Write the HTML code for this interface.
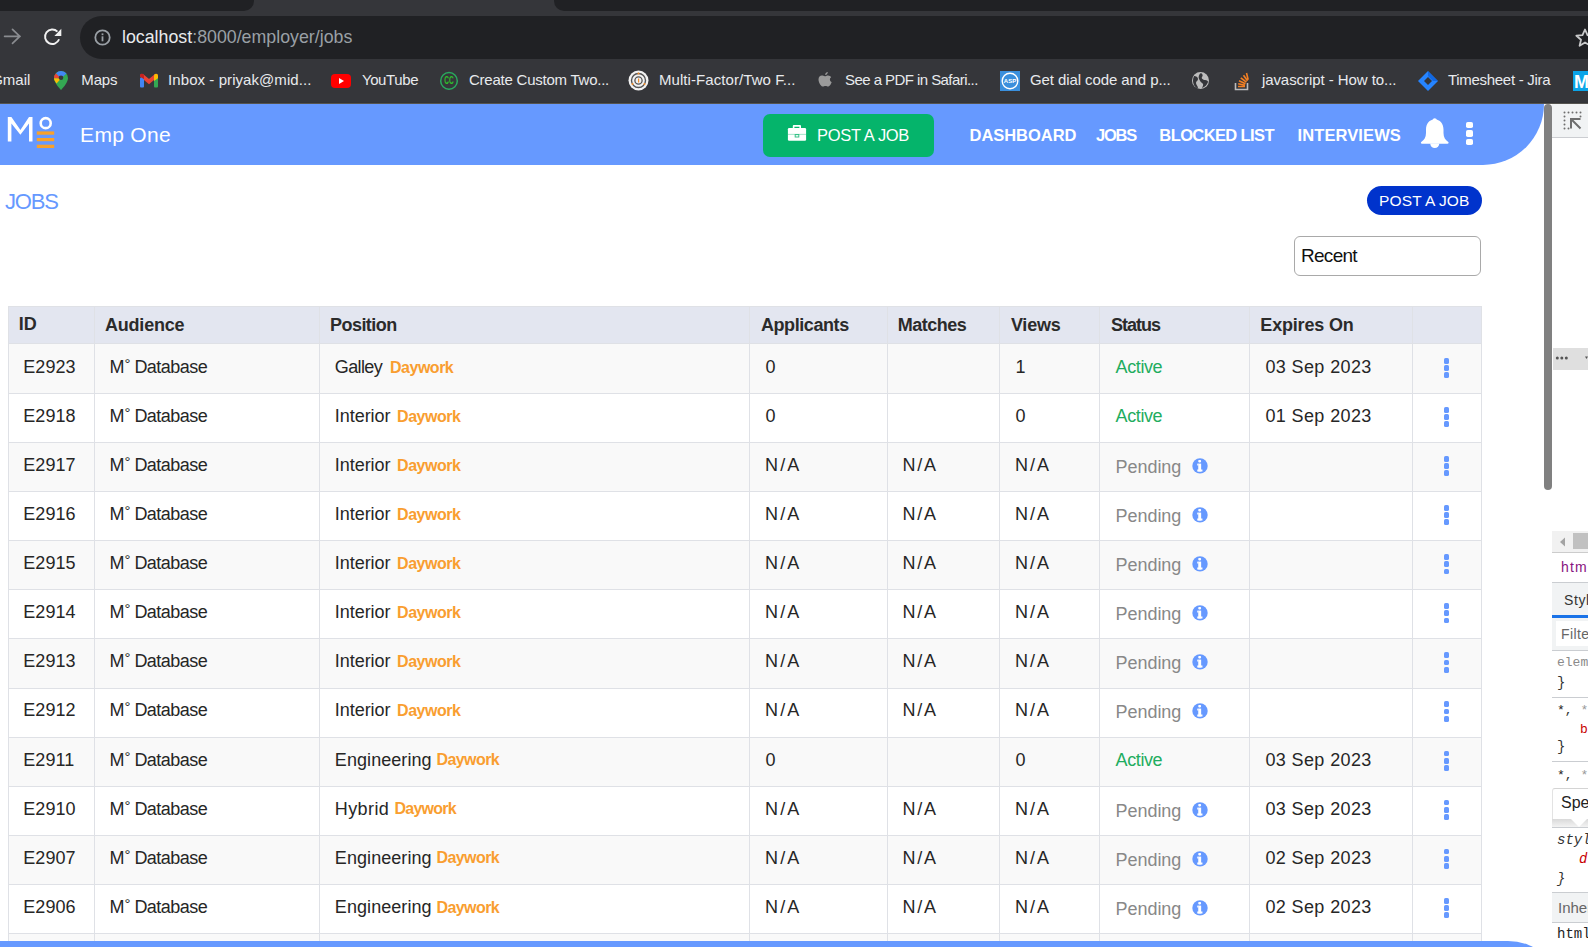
<!DOCTYPE html><html><head><meta charset="utf-8"><style>
*{box-sizing:border-box}
html,body{margin:0;padding:0}
body{width:1588px;height:947px;overflow:hidden;position:relative;background:#fff;font-family:"Liberation Sans",sans-serif}
.a{position:absolute}
.t{position:absolute;white-space:nowrap;line-height:1}
.bm{position:absolute;font-size:15px;color:#e8eaed;white-space:nowrap;line-height:1}
.nav{position:absolute;font-size:16.5px;font-weight:bold;color:#fff;white-space:nowrap;line-height:1}
.th{position:absolute;font-size:18px;font-weight:bold;color:#2b2b2b;white-space:nowrap;line-height:1}
.td{position:absolute;font-size:18px;color:#262626;white-space:nowrap;line-height:1}
.dw{font-size:15px;font-weight:bold;color:#f7a23b}
.act{color:#1fad5f}
.pen{color:#888}
.vl{position:absolute;width:1px;background:#dfe1e6}
.hl{position:absolute;height:1px;background:#dfe1e6}
.keb{position:absolute;width:5.4px}
.keb i{display:block;width:5.4px;height:5.8px;border-radius:1.6px;background:#6699ff;margin-bottom:1.4px}
</style></head><body>
<div class="a" style="left:0;top:0;width:1588px;height:104px;background:#35363a"></div>
<div class="a" style="left:0;top:0;width:254px;height:11px;background:#202124;border-bottom-right-radius:10px"></div>
<div class="a" style="left:554px;top:0;width:1040px;height:11px;background:#202124;border-bottom-left-radius:10px"></div>
<div class="a" style="left:0;top:102px;width:1588px;height:1px;background:#323337"></div>
<div class="a" style="left:0;top:103px;width:1588px;height:1px;background:#55544f"></div>
<svg class="a" style="left:0px;top:25px" width="24" height="24" viewBox="0 0 24 24"><path d="M4.6 11.3H20.1M12.5 4.3L19.8 11.3L12.5 18.4" stroke="#8a8c90" stroke-width="1.7" fill="none" stroke-linecap="round" stroke-linejoin="round"/></svg>
<svg class="a" style="left:40px;top:25px" width="26" height="24" viewBox="0 0 26 24"><path d="M19.1 14.23A7.25 7.25 0 1 1 17.43 6.62" stroke="#f1f1f1" stroke-width="1.9" fill="none"/><path d="M21.3 3.8V10.9H14.4Z" fill="#f1f1f1"/></svg>
<div class="a" style="left:80px;top:16px;width:1600px;height:43px;border-radius:21.5px;background:#202124"></div>
<svg class="a" style="left:94px;top:29px" width="17" height="17" viewBox="0 0 17 17"><circle cx="8.5" cy="8.5" r="7.2" stroke="#9aa0a6" stroke-width="1.8" fill="none"/><rect x="7.6" y="7.3" width="1.8" height="5" fill="#9aa0a6"/><rect x="7.6" y="4.4" width="1.8" height="1.8" fill="#9aa0a6"/></svg>
<div id="url" class="t" style="left:122.00px;top:28.60px;font-size:17.8px;color:#e8eaed">localhost<span style="color:#9aa0a6">:8000/employer/jobs</span></div>
<svg class="a" style="left:1574px;top:27px" width="22" height="22" viewBox="0 0 22 22"><path d="M11 2.5L13.5 8.2L19.6 8.7L15 12.7L16.4 18.7L11 15.5L5.6 18.7L7 12.7L2.4 8.7L8.5 8.2Z" stroke="#c9cacb" stroke-width="1.8" fill="none" stroke-linejoin="round"/></svg>
<div id="bm0" class="bm" style="left:-8.80px;top:72.37px;">Gmail</div>
<div id="bm1" class="bm" style="left:81.28px;top:72.37px;;letter-spacing:-0.120px">Maps</div>
<div id="bm2" class="bm" style="left:168.10px;top:72.37px;;letter-spacing:0.067px">Inbox - priyak@mid...</div>
<div id="bm3" class="bm" style="left:361.90px;top:72.37px;;letter-spacing:-0.375px">YouTube</div>
<div id="bm4" class="bm" style="left:469.00px;top:72.37px;;letter-spacing:-0.237px">Create Custom Two...</div>
<div id="bm5" class="bm" style="left:659.00px;top:72.37px;;letter-spacing:0.068px">Multi-Factor/Two F...</div>
<div id="bm6" class="bm" style="left:845.00px;top:72.37px;;letter-spacing:-0.557px">See a PDF in Safari...</div>
<div id="bm7" class="bm" style="left:1030.00px;top:72.37px;;letter-spacing:-0.086px">Get dial code and p...</div>
<div id="bm8" class="bm" style="left:1261.90px;top:72.37px;;letter-spacing:-0.064px">javascript - How to...</div>
<div id="bm9" class="bm" style="left:1448.00px;top:72.37px;;letter-spacing:-0.300px">Timesheet - Jira</div>
<svg class="a" style="left:53px;top:70px" width="16" height="21" viewBox="0 0 16 21"><path d="M8 1A7 7 0 0 0 1 8C1 13 8 20 8 20S15 13 15 8A7 7 0 0 0 8 1Z" fill="#34a853"/><path d="M3 3.2L8 8.5L1 8.2A7 7 0 0 1 3 3.2Z" fill="#ea4335"/><path d="M3 3.2A7 7 0 0 1 13.5 3.6L8 8.5Z" fill="#4285f4"/><path d="M1 8.2L8 8.5L3.5 13.5C2 11.5 1 9.6 1 8.2Z" fill="#fbbc04"/><circle cx="8" cy="7.8" r="2.3" fill="#35363a"/></svg>
<svg class="a" style="left:138px;top:71px" width="22" height="20" viewBox="0 0 22 20"><path d="M4 4.8L11 10.6L18 4.8" stroke="#ea4335" stroke-width="4" fill="none" stroke-linecap="round"/><rect x="2" y="6.6" width="4" height="9.8" rx="1" fill="#4285f4"/><rect x="16" y="6.6" width="4" height="9.8" rx="1" fill="#34a853"/><path d="M16 10V4.8A2 2 0 0 1 20 4.8V7.2Z" fill="#fbbc04"/><path d="M2 4.8A2 2 0 0 1 6 4.8V8.2L2 5.6Z" fill="#c5221f"/></svg>
<div class="a" style="left:331px;top:74.2px;width:20px;height:13.6px;border-radius:4px;background:#ff0000"></div><svg class="a" style="left:331px;top:74.2px" width="20" height="14" viewBox="0 0 20 14"><path d="M8 4L13 7L8 10Z" fill="#fff"/></svg>
<svg class="a" style="left:439px;top:71px" width="20" height="20" viewBox="0 0 20 20"><circle cx="10" cy="9.9" r="8.3" stroke="#2aa85e" stroke-width="1.5" fill="none"/><text x="0" y="0" transform="translate(10 13.4) scale(0.62 1)" font-size="10.5" font-family="Liberation Sans" font-weight="bold" fill="#2ec02a" text-anchor="middle">CC</text></svg>
<svg class="a" style="left:628px;top:70px" width="21" height="21" viewBox="0 0 21 21"><circle cx="10.5" cy="10.5" r="10" fill="#f2f2f2"/><circle cx="10.5" cy="10.5" r="7" stroke="#555" stroke-width="1.4" fill="none"/><circle cx="10.5" cy="10.5" r="3.6" stroke="#555" stroke-width="1.3" fill="none"/><rect x="10" y="8.5" width="1.2" height="4" fill="#f28c28"/><circle cx="10.5" cy="3.5" r="1" fill="#f28c28"/><circle cx="4.5" cy="14" r="1" fill="#f28c28"/><circle cx="16.5" cy="14" r="1" fill="#f28c28"/></svg>
<svg class="a" style="left:817px;top:71px" width="16" height="19" viewBox="0 0 16 19"><path d="M11 4.5C12.5 4.5 13.5 5.3 14.2 6.2C12.3 7.3 12.6 10.2 14.7 11C14.2 12.6 13 15 11.5 15.5C10.4 15.7 9.8 15 8.5 15C7.2 15 6.5 15.7 5.5 15.5C3.5 15 1.5 11 1.5 8.5C1.5 6 3.1 4.6 4.8 4.6C6 4.6 6.9 5.3 7.8 5.3C8.7 5.3 9.7 4.5 11 4.5ZM10.8 1C10.9 2.5 9.6 4 8.2 3.9C8 2.5 9.4 1.1 10.8 1Z" fill="#9a9a9a"/></svg>
<div class="a" style="left:1000px;top:71px;width:20px;height:20px;background:#3a8fdc"></div><svg class="a" style="left:1000px;top:71px" width="20" height="20" viewBox="0 0 20 20"><circle cx="10" cy="10" r="7.8" stroke="#fff" stroke-width="1.4" fill="none"/><text x="10" y="12.3" font-size="6" font-family="Liberation Sans" font-weight="bold" fill="#fff" text-anchor="middle">ASP</text></svg>
<svg class="a" style="left:1191px;top:71px" width="19" height="19" viewBox="0 0 19 19"><circle cx="9.5" cy="9.5" r="8.5" fill="#bdbdbd"/><path d="M3 5C5 5 7 6 7 8C7 10 5 10 5 12C5 14 7 15 7 17.5C4 16.5 2 13.5 2 9.5C2 8 2.4 6.4 3 5Z M10 2C12 3 12 5 11 6C10 7 12 9 14 9C16 9 17 10 17 11C16 14 14 16 11 17C12 15 13 13 11 12C9 11 9 9 8 8C7 6 8 3 10 2Z" fill="#35363a"/></svg>
<svg class="a" style="left:1233px;top:71px" width="18" height="20" viewBox="0 0 18 20"><path d="M2.5 12V18.5H14.5V12" stroke="#bcbbbb" stroke-width="1.6" fill="none"/><path d="M5 15.5H12M5.2 12.8L12 14.2M6 9.8L12.5 12.8M7.8 6.8L13.4 11.2M10.5 4.2L14.5 9.8M13.5 2L15.2 8.8" stroke="#f48024" stroke-width="1.6"/></svg>
<svg class="a" style="left:1417px;top:70px" width="22" height="22" viewBox="0 0 22 22"><path d="M11 1L21 11L11 21L1 11Z" fill="#2684ff"/><path d="M11 7L15 11L11 15L7 11Z" fill="#35363a"/><path d="M11 1L21 11L16 11L11 6Z" fill="#0052cc" opacity=".55"/></svg>
<div class="a" style="left:1573px;top:71px;width:20px;height:20px;background:#0ba4e8"></div><div class="t" style="left:1574px;top:73px;font-size:18px;font-weight:bold;color:#fff">M</div>
<div class="a" style="left:0;top:104px;width:1544px;height:61px;background:#6699ff;border-bottom-right-radius:62px 62px"></div>
<svg class="a" style="left:0px;top:110px" width="60" height="45" viewBox="0 0 60 45"><path d="M7.8 31.4V6.9H11.4L20.4 20L29 6.9H32.5V31.4H29V13.5L20.4 24.7L11.4 13.5V31.4Z" fill="#fff"/><circle cx="45.7" cy="13.15" r="5" stroke="#fff" stroke-width="2.6" fill="none"/><rect x="36.8" y="21.4" width="17.4" height="3.3" fill="#f9a12a"/><rect x="36.8" y="28" width="17.4" height="3.2" fill="#f9a12a"/><rect x="36.8" y="34.7" width="17.4" height="3.3" fill="#f9a12a"/></svg>
<div id="emp" class="t" style="left:80.10px;top:123.56px;font-size:21px;color:#fff;letter-spacing:0.300px">Emp One</div>
<div class="a" style="left:763px;top:114px;width:171px;height:43px;border-radius:7px;background:#05b46b"></div>
<svg class="a" style="left:787px;top:124px" width="20" height="18" viewBox="0 0 20 18"><path d="M5.8 4.2V2.1Q5.8 1.1 6.8 1.1H13Q14 1.1 14 2.1V4.2H12.4V2.7H7.4V4.2Z" fill="#fff"/><rect x="0.9" y="4.1" width="18.2" height="12.7" rx="1.2" fill="#fff"/><rect x="0.9" y="9.9" width="18.2" height="0.8" fill="#05b46b" opacity=".45"/><rect x="8.2" y="10.6" width="3.6" height="2.4" fill="#fff" stroke="#05b46b" stroke-width="1" opacity=".8"/></svg>
<div id="post1" class="t" style="left:817.00px;top:127.00px;font-size:16.5px;color:#fff;letter-spacing:-0.300px">POST A JOB</div>
<div id="nav1" class="nav" style="left:969.54px;top:127.28px;;letter-spacing:-0.045px">DASHBOARD</div>
<div id="nav2" class="nav" style="left:1096.00px;top:127.28px;;letter-spacing:-1.260px">JOBS</div>
<div id="nav3" class="nav" style="left:1159.36px;top:127.28px;;letter-spacing:-0.614px">BLOCKED LIST</div>
<div id="nav4" class="nav" style="left:1297.54px;top:127.28px;;letter-spacing:0.100px">INTERVIEWS</div>
<svg class="a" style="left:1415px;top:112px" width="40" height="40" viewBox="0 0 40 40"><path d="M19.7 7.2C14.5 7.5 11 11.5 11 17.5V21C11 25.5 9 28 6.5 29.8C5.5 30.5 5.8 31.7 7 31.7H32.5C33.7 31.7 34 30.5 33 29.8C30.5 28 28.5 25.5 28.5 21V17.5C28.5 11.5 25 7.5 19.7 7.2Z" fill="#fff"/><circle cx="19.7" cy="8.3" r="2" fill="#fff"/><path d="M15.2 31.5A4.55 4.55 0 0 0 24.3 31.5Z" fill="#fff"/></svg>
<div class="a" style="left:1466px;top:122px;width:7px;height:6.4px;border-radius:1.8px;background:#fff"></div>
<div class="a" style="left:1466px;top:130.4px;width:7px;height:6.4px;border-radius:1.8px;background:#fff"></div>
<div class="a" style="left:1466px;top:138.7px;width:7px;height:6.4px;border-radius:1.8px;background:#fff"></div>
<div id="jobs" class="t" style="left:5.00px;top:190.92px;font-size:22px;color:#6699ff;letter-spacing:-1.200px">JOBS</div>
<div class="a" style="left:1367px;top:186px;width:115px;height:29px;border-radius:15px;background:#0033cc"></div>
<div id="post2" class="t" style="left:1379.10px;top:192.74px;font-size:15.5px;color:#fff;letter-spacing:0.100px">POST A JOB</div>
<div class="a" style="left:1294px;top:236px;width:187px;height:40px;border-radius:6px;border:1px solid #a9a9a9;background:#fff"></div>
<div id="recent" class="t" style="left:1301.00px;top:245.82px;font-size:19px;color:#111;letter-spacing:-0.720px">Recent</div>
<div class="a" style="left:8px;top:307px;width:1474px;height:36px;background:#e3e6f0"></div>
<div class="a" style="left:8px;top:344px;width:1474px;height:49px;background:#f9f9f9"></div>
<div class="a" style="left:8px;top:394px;width:1474px;height:48px;background:#fff"></div>
<div class="a" style="left:8px;top:443px;width:1474px;height:48px;background:#f9f9f9"></div>
<div class="a" style="left:8px;top:492px;width:1474px;height:48px;background:#fff"></div>
<div class="a" style="left:8px;top:541px;width:1474px;height:48px;background:#f9f9f9"></div>
<div class="a" style="left:8px;top:590px;width:1474px;height:48px;background:#fff"></div>
<div class="a" style="left:8px;top:639px;width:1474px;height:49px;background:#f9f9f9"></div>
<div class="a" style="left:8px;top:689px;width:1474px;height:48px;background:#fff"></div>
<div class="a" style="left:8px;top:738px;width:1474px;height:48px;background:#f9f9f9"></div>
<div class="a" style="left:8px;top:787px;width:1474px;height:48px;background:#fff"></div>
<div class="a" style="left:8px;top:836px;width:1474px;height:48px;background:#f9f9f9"></div>
<div class="a" style="left:8px;top:885px;width:1474px;height:48px;background:#fff"></div>
<div class="a" style="left:8px;top:934px;width:1474px;height:7px;background:#f9f9f9"></div>
<div class="hl" style="left:8px;top:306px;width:1474px"></div>
<div class="hl" style="left:8px;top:343px;width:1474px"></div>
<div class="hl" style="left:8px;top:393px;width:1474px"></div>
<div class="hl" style="left:8px;top:442px;width:1474px"></div>
<div class="hl" style="left:8px;top:491px;width:1474px"></div>
<div class="hl" style="left:8px;top:540px;width:1474px"></div>
<div class="hl" style="left:8px;top:589px;width:1474px"></div>
<div class="hl" style="left:8px;top:638px;width:1474px"></div>
<div class="hl" style="left:8px;top:688px;width:1474px"></div>
<div class="hl" style="left:8px;top:737px;width:1474px"></div>
<div class="hl" style="left:8px;top:786px;width:1474px"></div>
<div class="hl" style="left:8px;top:835px;width:1474px"></div>
<div class="hl" style="left:8px;top:884px;width:1474px"></div>
<div class="hl" style="left:8px;top:933px;width:1474px"></div>
<div class="vl" style="left:8px;top:306px;height:635px"></div>
<div class="vl" style="left:94px;top:306px;height:635px"></div>
<div class="vl" style="left:319px;top:306px;height:635px"></div>
<div class="vl" style="left:749px;top:306px;height:635px"></div>
<div class="vl" style="left:887px;top:306px;height:635px"></div>
<div class="vl" style="left:999px;top:306px;height:635px"></div>
<div class="vl" style="left:1099px;top:306px;height:635px"></div>
<div class="vl" style="left:1249px;top:306px;height:635px"></div>
<div class="vl" style="left:1412px;top:306px;height:635px"></div>
<div class="vl" style="left:1481px;top:306px;height:635px"></div>
<div id="th0" class="th" style="left:18.72px;top:315.46px;">ID</div>
<div id="th1" class="th" style="left:105.08px;top:316.18px;;letter-spacing:-0.231px">Audience</div>
<div id="th2" class="th" style="left:330.04px;top:316.00px;;letter-spacing:-0.553px">Position</div>
<div id="th3" class="th" style="left:760.90px;top:316.00px;;letter-spacing:-0.410px">Applicants</div>
<div id="th4" class="th" style="left:897.86px;top:316.18px;;letter-spacing:-0.525px">Matches</div>
<div id="th5" class="th" style="left:1010.90px;top:316.18px;;letter-spacing:-0.203px">Views</div>
<div id="th6" class="th" style="left:1110.90px;top:316.00px;;letter-spacing:-0.990px">Status</div>
<div id="th7" class="th" style="left:1260.36px;top:316.18px;;letter-spacing:-0.190px">Expires On</div>
<div id="id0" class="td" style="left:23.32px;top:357.83px;;letter-spacing:0.045px">E2923</div>
<div id="aud0" class="td" style="left:109.50px;top:357.83px;;letter-spacing:-0.540px">M<span style="font-size:15px;position:relative;top:-4px;margin-left:.5px">°</span> Database</div>
<div id="pos_Galley" class="td" style="left:334.86px;top:357.83px;;letter-spacing:-0.630px">Galley</div>
<div id="dw_Galley" class="td" style="left:390.06px;top:359.53px;font-size:16px;font-weight:bold;color:#f99e30;letter-spacing:-0.495px">Daywork</div>
<div id="app_0" class="td" style="left:765.58px;top:357.83px;">0</div>
<div id="vw_1" class="td" style="left:1015.58px;top:357.83px;">1</div>
<div id="act" class="td" style="left:1115.58px;top:357.83px;color:#1fad5f;letter-spacing:-0.396px">Active</div>
<div id="exp" class="td" style="left:1265.40px;top:357.83px;;letter-spacing:0.387px">03 Sep 2023</div>
<div class="keb" style="left:1443.9px;top:357.80px"><i></i><i></i><i></i></div>
<div class="td" style="left:23.32px;top:406.92px;;letter-spacing:0.045px">E2918</div>
<div class="td" style="left:109.50px;top:406.92px;;letter-spacing:-0.540px">M<span style="font-size:15px;position:relative;top:-4px;margin-left:.5px">°</span> Database</div>
<div id="pos_Interior" class="td" style="left:334.86px;top:406.92px;;letter-spacing:-0.051px">Interior</div>
<div id="dw_Interior" class="td" style="left:397.12px;top:408.62px;font-size:16px;font-weight:bold;color:#f99e30;letter-spacing:-0.495px">Daywork</div>
<div class="td" style="left:765.58px;top:406.92px;">0</div>
<div id="vw_0" class="td" style="left:1015.40px;top:406.92px;">0</div>
<div class="td" style="left:1115.58px;top:406.92px;color:#1fad5f;letter-spacing:-0.396px">Active</div>
<div class="td" style="left:1265.40px;top:406.92px;;letter-spacing:0.387px">01 Sep 2023</div>
<div class="keb" style="left:1443.9px;top:406.89px"><i></i><i></i><i></i></div>
<div class="td" style="left:23.32px;top:456.01px;;letter-spacing:0.045px">E2917</div>
<div class="td" style="left:109.50px;top:456.01px;;letter-spacing:-0.540px">M<span style="font-size:15px;position:relative;top:-4px;margin-left:.5px">°</span> Database</div>
<div class="td" style="left:334.86px;top:456.01px;;letter-spacing:-0.051px">Interior</div>
<div class="td" style="left:397.12px;top:457.71px;font-size:16px;font-weight:bold;color:#f99e30;letter-spacing:-0.495px">Daywork</div>
<div id="app_N/A" class="td" style="left:765.04px;top:456.01px;;letter-spacing:2.160px">N/A</div>
<div id="mat_N/A" class="td" style="left:902.58px;top:456.01px;;letter-spacing:1.710px">N/A</div>
<div id="vw_N/A" class="td" style="left:1015.04px;top:456.01px;;letter-spacing:2.025px">N/A</div>
<div id="pen" class="td" style="left:1115.54px;top:458.01px;color:#888;letter-spacing:-0.045px">Pending</div>
<svg class="a" style="left:1191.75px;top:457.98px" width="16" height="16" viewBox="0 0 16 16"><circle cx="8" cy="7.9" r="7.7" fill="#6699ff"/><rect x="6.25" y="2" width="2.8" height="2.4" rx=".8" fill="#fff"/><rect x="6.25" y="5.6" width="2.9" height="7.9" fill="#fff"/><rect x="5.25" y="5.6" width="1.2" height="1.9" fill="#fff"/><rect x="5.25" y="11.5" width="5.2" height="2" fill="#fff"/></svg>
<div class="keb" style="left:1443.9px;top:455.98px"><i></i><i></i><i></i></div>
<div class="td" style="left:23.32px;top:505.10px;;letter-spacing:0.045px">E2916</div>
<div class="td" style="left:109.50px;top:505.10px;;letter-spacing:-0.540px">M<span style="font-size:15px;position:relative;top:-4px;margin-left:.5px">°</span> Database</div>
<div class="td" style="left:334.86px;top:505.10px;;letter-spacing:-0.051px">Interior</div>
<div class="td" style="left:397.12px;top:506.80px;font-size:16px;font-weight:bold;color:#f99e30;letter-spacing:-0.495px">Daywork</div>
<div class="td" style="left:765.04px;top:505.10px;;letter-spacing:2.160px">N/A</div>
<div class="td" style="left:902.58px;top:505.10px;;letter-spacing:1.710px">N/A</div>
<div class="td" style="left:1015.04px;top:505.10px;;letter-spacing:2.025px">N/A</div>
<div class="td" style="left:1115.54px;top:507.10px;color:#888;letter-spacing:-0.045px">Pending</div>
<svg class="a" style="left:1191.75px;top:507.07px" width="16" height="16" viewBox="0 0 16 16"><circle cx="8" cy="7.9" r="7.7" fill="#6699ff"/><rect x="6.25" y="2" width="2.8" height="2.4" rx=".8" fill="#fff"/><rect x="6.25" y="5.6" width="2.9" height="7.9" fill="#fff"/><rect x="5.25" y="5.6" width="1.2" height="1.9" fill="#fff"/><rect x="5.25" y="11.5" width="5.2" height="2" fill="#fff"/></svg>
<div class="keb" style="left:1443.9px;top:505.07px"><i></i><i></i><i></i></div>
<div class="td" style="left:23.32px;top:554.19px;;letter-spacing:0.045px">E2915</div>
<div class="td" style="left:109.50px;top:554.19px;;letter-spacing:-0.540px">M<span style="font-size:15px;position:relative;top:-4px;margin-left:.5px">°</span> Database</div>
<div class="td" style="left:334.86px;top:554.19px;;letter-spacing:-0.051px">Interior</div>
<div class="td" style="left:397.12px;top:555.89px;font-size:16px;font-weight:bold;color:#f99e30;letter-spacing:-0.495px">Daywork</div>
<div class="td" style="left:765.04px;top:554.19px;;letter-spacing:2.160px">N/A</div>
<div class="td" style="left:902.58px;top:554.19px;;letter-spacing:1.710px">N/A</div>
<div class="td" style="left:1015.04px;top:554.19px;;letter-spacing:2.025px">N/A</div>
<div class="td" style="left:1115.54px;top:556.19px;color:#888;letter-spacing:-0.045px">Pending</div>
<svg class="a" style="left:1191.75px;top:556.16px" width="16" height="16" viewBox="0 0 16 16"><circle cx="8" cy="7.9" r="7.7" fill="#6699ff"/><rect x="6.25" y="2" width="2.8" height="2.4" rx=".8" fill="#fff"/><rect x="6.25" y="5.6" width="2.9" height="7.9" fill="#fff"/><rect x="5.25" y="5.6" width="1.2" height="1.9" fill="#fff"/><rect x="5.25" y="11.5" width="5.2" height="2" fill="#fff"/></svg>
<div class="keb" style="left:1443.9px;top:554.16px"><i></i><i></i><i></i></div>
<div class="td" style="left:23.32px;top:603.28px;;letter-spacing:0.045px">E2914</div>
<div class="td" style="left:109.50px;top:603.28px;;letter-spacing:-0.540px">M<span style="font-size:15px;position:relative;top:-4px;margin-left:.5px">°</span> Database</div>
<div class="td" style="left:334.86px;top:603.28px;;letter-spacing:-0.051px">Interior</div>
<div class="td" style="left:397.12px;top:604.98px;font-size:16px;font-weight:bold;color:#f99e30;letter-spacing:-0.495px">Daywork</div>
<div class="td" style="left:765.04px;top:603.28px;;letter-spacing:2.160px">N/A</div>
<div class="td" style="left:902.58px;top:603.28px;;letter-spacing:1.710px">N/A</div>
<div class="td" style="left:1015.04px;top:603.28px;;letter-spacing:2.025px">N/A</div>
<div class="td" style="left:1115.54px;top:605.28px;color:#888;letter-spacing:-0.045px">Pending</div>
<svg class="a" style="left:1191.75px;top:605.25px" width="16" height="16" viewBox="0 0 16 16"><circle cx="8" cy="7.9" r="7.7" fill="#6699ff"/><rect x="6.25" y="2" width="2.8" height="2.4" rx=".8" fill="#fff"/><rect x="6.25" y="5.6" width="2.9" height="7.9" fill="#fff"/><rect x="5.25" y="5.6" width="1.2" height="1.9" fill="#fff"/><rect x="5.25" y="11.5" width="5.2" height="2" fill="#fff"/></svg>
<div class="keb" style="left:1443.9px;top:603.25px"><i></i><i></i><i></i></div>
<div class="td" style="left:23.32px;top:652.37px;;letter-spacing:0.045px">E2913</div>
<div class="td" style="left:109.50px;top:652.37px;;letter-spacing:-0.540px">M<span style="font-size:15px;position:relative;top:-4px;margin-left:.5px">°</span> Database</div>
<div class="td" style="left:334.86px;top:652.37px;;letter-spacing:-0.051px">Interior</div>
<div class="td" style="left:397.12px;top:654.07px;font-size:16px;font-weight:bold;color:#f99e30;letter-spacing:-0.495px">Daywork</div>
<div class="td" style="left:765.04px;top:652.37px;;letter-spacing:2.160px">N/A</div>
<div class="td" style="left:902.58px;top:652.37px;;letter-spacing:1.710px">N/A</div>
<div class="td" style="left:1015.04px;top:652.37px;;letter-spacing:2.025px">N/A</div>
<div class="td" style="left:1115.54px;top:654.37px;color:#888;letter-spacing:-0.045px">Pending</div>
<svg class="a" style="left:1191.75px;top:654.34px" width="16" height="16" viewBox="0 0 16 16"><circle cx="8" cy="7.9" r="7.7" fill="#6699ff"/><rect x="6.25" y="2" width="2.8" height="2.4" rx=".8" fill="#fff"/><rect x="6.25" y="5.6" width="2.9" height="7.9" fill="#fff"/><rect x="5.25" y="5.6" width="1.2" height="1.9" fill="#fff"/><rect x="5.25" y="11.5" width="5.2" height="2" fill="#fff"/></svg>
<div class="keb" style="left:1443.9px;top:652.34px"><i></i><i></i><i></i></div>
<div class="td" style="left:23.32px;top:701.46px;;letter-spacing:0.045px">E2912</div>
<div class="td" style="left:109.50px;top:701.46px;;letter-spacing:-0.540px">M<span style="font-size:15px;position:relative;top:-4px;margin-left:.5px">°</span> Database</div>
<div class="td" style="left:334.86px;top:701.46px;;letter-spacing:-0.051px">Interior</div>
<div class="td" style="left:397.12px;top:703.16px;font-size:16px;font-weight:bold;color:#f99e30;letter-spacing:-0.495px">Daywork</div>
<div class="td" style="left:765.04px;top:701.46px;;letter-spacing:2.160px">N/A</div>
<div class="td" style="left:902.58px;top:701.46px;;letter-spacing:1.710px">N/A</div>
<div class="td" style="left:1015.04px;top:701.46px;;letter-spacing:2.025px">N/A</div>
<div class="td" style="left:1115.54px;top:703.46px;color:#888;letter-spacing:-0.045px">Pending</div>
<svg class="a" style="left:1191.75px;top:703.43px" width="16" height="16" viewBox="0 0 16 16"><circle cx="8" cy="7.9" r="7.7" fill="#6699ff"/><rect x="6.25" y="2" width="2.8" height="2.4" rx=".8" fill="#fff"/><rect x="6.25" y="5.6" width="2.9" height="7.9" fill="#fff"/><rect x="5.25" y="5.6" width="1.2" height="1.9" fill="#fff"/><rect x="5.25" y="11.5" width="5.2" height="2" fill="#fff"/></svg>
<div class="keb" style="left:1443.9px;top:701.43px"><i></i><i></i><i></i></div>
<div class="td" style="left:23.32px;top:750.55px;;letter-spacing:0.045px">E2911</div>
<div class="td" style="left:109.50px;top:750.55px;;letter-spacing:-0.540px">M<span style="font-size:15px;position:relative;top:-4px;margin-left:.5px">°</span> Database</div>
<div id="pos_Engineering" class="td" style="left:334.86px;top:750.55px;;letter-spacing:0.063px">Engineering</div>
<div id="dw_Engineering" class="td" style="left:436.50px;top:752.25px;font-size:16px;font-weight:bold;color:#f99e30;letter-spacing:-0.585px">Daywork</div>
<div class="td" style="left:765.58px;top:750.55px;">0</div>
<div class="td" style="left:1015.40px;top:750.55px;">0</div>
<div class="td" style="left:1115.58px;top:750.55px;color:#1fad5f;letter-spacing:-0.396px">Active</div>
<div class="td" style="left:1265.40px;top:750.55px;;letter-spacing:0.387px">03 Sep 2023</div>
<div class="keb" style="left:1443.9px;top:750.52px"><i></i><i></i><i></i></div>
<div class="td" style="left:23.32px;top:799.64px;;letter-spacing:0.045px">E2910</div>
<div class="td" style="left:109.50px;top:799.64px;;letter-spacing:-0.540px">M<span style="font-size:15px;position:relative;top:-4px;margin-left:.5px">°</span> Database</div>
<div id="pos_Hybrid" class="td" style="left:334.86px;top:799.64px;;letter-spacing:0.378px">Hybrid</div>
<div id="dw_Hybrid" class="td" style="left:394.50px;top:801.34px;font-size:16px;font-weight:bold;color:#f99e30;letter-spacing:-0.765px">Daywork</div>
<div class="td" style="left:765.04px;top:799.64px;;letter-spacing:2.160px">N/A</div>
<div class="td" style="left:902.58px;top:799.64px;;letter-spacing:1.710px">N/A</div>
<div class="td" style="left:1015.04px;top:799.64px;;letter-spacing:2.025px">N/A</div>
<div class="td" style="left:1115.54px;top:801.64px;color:#888;letter-spacing:-0.045px">Pending</div>
<svg class="a" style="left:1191.75px;top:801.61px" width="16" height="16" viewBox="0 0 16 16"><circle cx="8" cy="7.9" r="7.7" fill="#6699ff"/><rect x="6.25" y="2" width="2.8" height="2.4" rx=".8" fill="#fff"/><rect x="6.25" y="5.6" width="2.9" height="7.9" fill="#fff"/><rect x="5.25" y="5.6" width="1.2" height="1.9" fill="#fff"/><rect x="5.25" y="11.5" width="5.2" height="2" fill="#fff"/></svg>
<div class="td" style="left:1265.40px;top:799.64px;;letter-spacing:0.387px">03 Sep 2023</div>
<div class="keb" style="left:1443.9px;top:799.61px"><i></i><i></i><i></i></div>
<div class="td" style="left:23.32px;top:848.73px;;letter-spacing:0.045px">E2907</div>
<div class="td" style="left:109.50px;top:848.73px;;letter-spacing:-0.540px">M<span style="font-size:15px;position:relative;top:-4px;margin-left:.5px">°</span> Database</div>
<div class="td" style="left:334.86px;top:848.73px;;letter-spacing:0.063px">Engineering</div>
<div class="td" style="left:436.50px;top:850.43px;font-size:16px;font-weight:bold;color:#f99e30;letter-spacing:-0.585px">Daywork</div>
<div class="td" style="left:765.04px;top:848.73px;;letter-spacing:2.160px">N/A</div>
<div class="td" style="left:902.58px;top:848.73px;;letter-spacing:1.710px">N/A</div>
<div class="td" style="left:1015.04px;top:848.73px;;letter-spacing:2.025px">N/A</div>
<div class="td" style="left:1115.54px;top:850.73px;color:#888;letter-spacing:-0.045px">Pending</div>
<svg class="a" style="left:1191.75px;top:850.70px" width="16" height="16" viewBox="0 0 16 16"><circle cx="8" cy="7.9" r="7.7" fill="#6699ff"/><rect x="6.25" y="2" width="2.8" height="2.4" rx=".8" fill="#fff"/><rect x="6.25" y="5.6" width="2.9" height="7.9" fill="#fff"/><rect x="5.25" y="5.6" width="1.2" height="1.9" fill="#fff"/><rect x="5.25" y="11.5" width="5.2" height="2" fill="#fff"/></svg>
<div class="td" style="left:1265.40px;top:848.73px;;letter-spacing:0.387px">02 Sep 2023</div>
<div class="keb" style="left:1443.9px;top:848.70px"><i></i><i></i><i></i></div>
<div class="td" style="left:23.32px;top:897.82px;;letter-spacing:0.045px">E2906</div>
<div class="td" style="left:109.50px;top:897.82px;;letter-spacing:-0.540px">M<span style="font-size:15px;position:relative;top:-4px;margin-left:.5px">°</span> Database</div>
<div class="td" style="left:334.86px;top:897.82px;;letter-spacing:0.063px">Engineering</div>
<div class="td" style="left:436.50px;top:899.52px;font-size:16px;font-weight:bold;color:#f99e30;letter-spacing:-0.585px">Daywork</div>
<div class="td" style="left:765.04px;top:897.82px;;letter-spacing:2.160px">N/A</div>
<div class="td" style="left:902.58px;top:897.82px;;letter-spacing:1.710px">N/A</div>
<div class="td" style="left:1015.04px;top:897.82px;;letter-spacing:2.025px">N/A</div>
<div class="td" style="left:1115.54px;top:899.82px;color:#888;letter-spacing:-0.045px">Pending</div>
<svg class="a" style="left:1191.75px;top:899.79px" width="16" height="16" viewBox="0 0 16 16"><circle cx="8" cy="7.9" r="7.7" fill="#6699ff"/><rect x="6.25" y="2" width="2.8" height="2.4" rx=".8" fill="#fff"/><rect x="6.25" y="5.6" width="2.9" height="7.9" fill="#fff"/><rect x="5.25" y="5.6" width="1.2" height="1.9" fill="#fff"/><rect x="5.25" y="11.5" width="5.2" height="2" fill="#fff"/></svg>
<div class="td" style="left:1265.40px;top:897.82px;;letter-spacing:0.387px">02 Sep 2023</div>
<div class="keb" style="left:1443.9px;top:897.79px"><i></i><i></i><i></i></div>
<div class="a" style="left:0;top:941px;width:1563px;height:70px;background:#6699ff;border-top-right-radius:55px 55px"></div>
<div class="a" style="left:1544px;top:104px;width:8px;height:386px;border-radius:4px;background:#808080"></div>
<div class="a" style="left:1552px;top:104px;width:40px;height:843px;background:#fff"></div>
<div class="a" style="left:1552px;top:104px;width:40px;height:34px;background:#f1f3f4;border-bottom:1px solid #cbcdd1"></div>
<svg class="a" style="left:1562px;top:110px" width="22" height="22" viewBox="0 0 22 22"><g fill="#6e6e6e"><circle cx="2.5" cy="2.5" r="1"/><circle cx="6.5" cy="2.5" r="1"/><circle cx="10.5" cy="2.5" r="1"/><circle cx="14.5" cy="2.5" r="1"/><circle cx="18.5" cy="2.5" r="1"/><circle cx="2.5" cy="6.5" r="1"/><circle cx="18.5" cy="6.5" r="1"/><circle cx="2.5" cy="10.5" r="1"/><circle cx="2.5" cy="14.5" r="1"/><circle cx="2.5" cy="18.5" r="1"/><circle cx="6.5" cy="18.5" r="1"/></g><path d="M9 18.5V9H18.5M9 9L18.5 18.5" stroke="#6e6e6e" stroke-width="2" fill="none"/></svg>
<div class="a" style="left:1553px;top:348px;width:40px;height:22px;background:#dfdfdf"></div>
<svg class="a" style="left:1553px;top:352px" width="36" height="12" viewBox="0 0 36 12"><g fill="#555"><circle cx="4.3" cy="6" r="1.5"/><circle cx="8.8" cy="6" r="1.5"/><circle cx="13.3" cy="6" r="1.5"/></g><path d="M32 4.5L35 4.5L33.5 7Z" fill="#555"/></svg>
<div class="a" style="left:1552px;top:531px;width:40px;height:22px;background:#f1f1f1;border-bottom:1px solid #ccc"></div>
<svg class="a" style="left:1558px;top:536px" width="10" height="12" viewBox="0 0 10 12"><path d="M7 1.5V10.5L2 6Z" fill="#a3a3a3"/></svg>
<div class="a" style="left:1573px;top:533px;width:20px;height:16px;background:#c1c1c1"></div>
<div class="t" style="left:1561px;top:560px;font-size:14px;letter-spacing:1.2px;color:#881280">html</div>
<div class="a" style="left:1552px;top:582px;width:40px;height:36px;background:#f1f3f4;border-top:1px solid #cacdd1"></div>
<div class="t" style="left:1564px;top:593px;font-size:14px;letter-spacing:0.6px;color:#333">Styles</div>
<div class="a" style="left:1552px;top:615px;width:40px;height:3px;background:#1a73e8"></div>
<div class="a" style="left:1552px;top:618px;width:40px;height:33px;background:#f1f3f4;border-bottom:1px solid #cacdd1"></div>
<div class="a" style="left:1556px;top:621px;width:40px;height:25px;background:#fff"></div>
<div class="t" style="left:1561px;top:627px;font-size:14px;letter-spacing:0.4px;color:#666">Filter</div>
<div class="t" style="left:1557px;top:656px;font-family:'Liberation Mono',monospace;font-size:13px;color:#8a8a8a">element</div>
<div class="t" style="left:1557px;top:676px;font-family:'Liberation Mono',monospace;font-size:13px;font-size:14px;color:#333">}</div>
<div class="a" style="left:1552px;top:697px;width:40px;height:1px;background:#cacdd1"></div>
<div class="t" style="left:1557px;top:704px;font-family:'Liberation Mono',monospace;font-size:13px;color:#222">*<span style="color:#333">,</span> <span style="color:#999">*</span></div>
<div class="t" style="left:1580px;top:723px;font-family:'Liberation Mono',monospace;font-size:13px;color:#c80000">b</div>
<div class="t" style="left:1557px;top:740px;font-family:'Liberation Mono',monospace;font-size:13px;font-size:14px;color:#333">}</div>
<div class="a" style="left:1552px;top:761px;width:40px;height:1px;background:#cacdd1"></div>
<div class="t" style="left:1557px;top:769px;font-family:'Liberation Mono',monospace;font-size:13px;color:#222">*<span style="color:#333">,</span> <span style="color:#999">*</span></div>
<div class="a" style="left:1552px;top:819px;width:40px;height:8px;background:linear-gradient(#d9d9d9,#f3f3f3)"></div>
<div class="a" style="left:1552px;top:827px;width:40px;height:1px;background:#cacdd1"></div>
<div class="a" style="left:1552px;top:788px;width:40px;height:31px;background:#fff;border-top:1px solid #d4d4d4;border-left:1px solid #e3e3e3;border-top-left-radius:3px"></div>
<svg class="a" style="left:1570px;top:818px" width="18" height="10" viewBox="0 0 18 10"><path d="M0 0H18L9 9Z" fill="#fff"/></svg>
<div class="t" style="left:1561px;top:795px;font-size:16px;color:#222">Specificity</div>
<div class="t" style="left:1557px;top:833px;font-family:'Liberation Mono',monospace;font-size:13px;font-size:14px;color:#333;font-style:italic">style</div>
<div class="t" style="left:1579px;top:852px;font-family:'Liberation Mono',monospace;font-size:13px;font-size:14px;color:#c80000;font-style:italic">d</div>
<div class="t" style="left:1557px;top:872px;font-family:'Liberation Mono',monospace;font-size:13px;font-size:14px;color:#333;font-style:italic">}</div>
<div class="a" style="left:1552px;top:892px;width:40px;height:31px;background:#f1f3f4;border-top:1px solid #cacdd1;border-bottom:1px solid #cacdd1"></div>
<div class="t" style="left:1558px;top:900px;font-size:15px;color:#666">Inherited</div>
<div class="t" style="left:1557px;top:927px;font-family:'Liberation Mono',monospace;font-size:13px;font-size:14px;color:#222">html</div>
</body></html>
